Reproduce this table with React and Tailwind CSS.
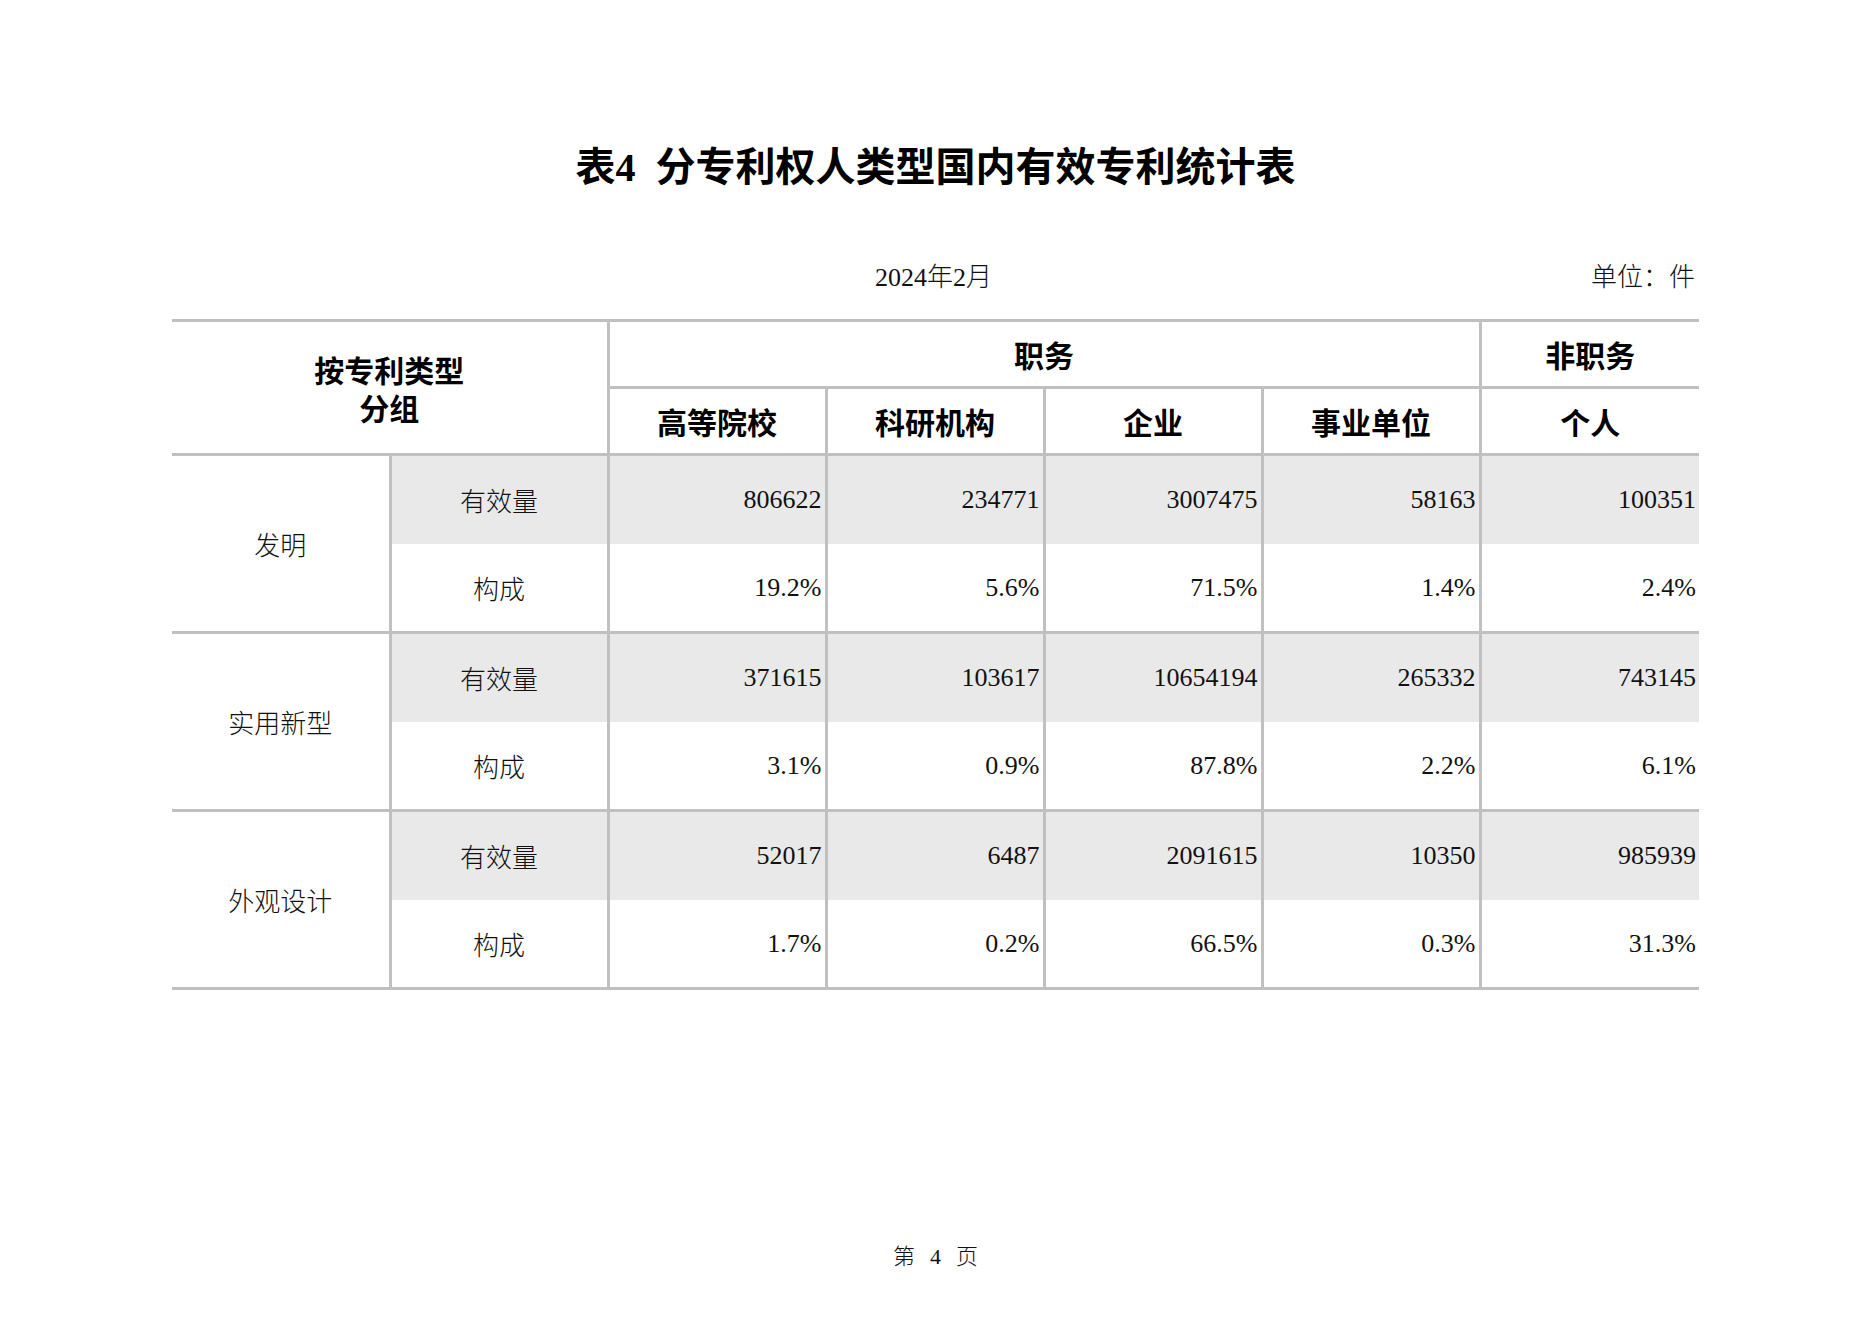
import React from "react";

const groups = [
  {
    name: "发明",
    count: ["806622", "234771", "3007475", "58163", "100351"],
    pct: ["19.2%", "5.6%", "71.5%", "1.4%", "2.4%"],
  },
  {
    name: "实用新型",
    count: ["371615", "103617", "10654194", "265332", "743145"],
    pct: ["3.1%", "0.9%", "87.8%", "2.2%", "6.1%"],
  },
  {
    name: "外观设计",
    count: ["52017", "6487", "2091615", "10350", "985939"],
    pct: ["1.7%", "0.2%", "66.5%", "0.3%", "31.3%"],
  },
];

const subHeads = ["高等院校", "科研机构", "企业", "事业单位", "个人"];

function NumCell({ v, gray, last, bottom }) {
  return (
    <td
      className={
        "text-right align-middle pr-[3px] text-[26px] text-[#111] font-['Liberation_Serif','Noto_Sans_CJK_SC',serif] border-[#c0c0c0] " +
        (gray ? "bg-[#e9e9e9] " : "bg-white ") +
        (last ? "" : "border-r-[3px] ") +
        (bottom ? "border-b-[3px]" : "")
      }
    >
      {v}
    </td>
  );
}

export default function App() {
  return (
    <div className="w-[1871px] h-[1323px] bg-white font-['Liberation_Serif','Noto_Sans_CJK_SC',serif] text-black">
      <div className="pt-[130px]">
        <div className="h-[76px] leading-[76px] text-center text-[40px] font-bold font-['Liberation_Serif','Noto_Sans_CJK_SC',sans-serif]">
          表4&nbsp;&nbsp;分专利权人类型国内有效专利统计表
        </div>
      </div>
      <div className="w-[1527px] mx-auto">
        <div className="mt-[51px] h-[40px] grid grid-cols-[1fr_auto_1fr] items-center text-[26px] text-[#111] font-light">
          <div />
          <div className="pr-[4px]">2024年2月</div>
          <div className="text-right pr-[4px]">单位：件</div>
        </div>
        <table className="mt-[22px] w-[1527px] table-fixed border-collapse">
          <colgroup>
            <col className="w-[218px]" />
            <col className="w-[218px]" />
            <col className="w-[218px]" />
            <col className="w-[218px]" />
            <col className="w-[218px]" />
            <col className="w-[218px]" />
            <col className="w-[219px]" />
          </colgroup>
          <thead className="font-['Noto_Sans_CJK_SC',sans-serif] font-bold text-[30px] text-black">
            <tr className="h-[67px]">
              <th
                colSpan={2}
                rowSpan={2}
                className="border-t-[3px] border-b-[3px] border-r-[3px] border-[#c0c0c0] font-bold leading-[38px] text-center align-middle"
              >
                <div>按专利类型</div>
                <div>分组</div>
              </th>
              <th
                colSpan={4}
                className="border-t-[3px] border-b-[3px] border-r-[3px] border-[#c0c0c0] font-bold text-center align-middle"
              >
                职务
              </th>
              <th className="border-t-[3px] border-b-[3px] border-[#c0c0c0] font-bold text-center align-middle">
                非职务
              </th>
            </tr>
            <tr className="h-[67px]">
              {subHeads.map((h, i) => (
                <th
                  key={h}
                  className={
                    "border-b-[3px] border-[#c0c0c0] font-bold text-center align-middle " +
                    (i < subHeads.length - 1 ? "border-r-[3px]" : "")
                  }
                >
                  {h}
                </th>
              ))}
            </tr>
          </thead>
          <tbody className="font-light">
            {groups.map((g) => (
              <React.Fragment key={g.name}>
                <tr className="h-[89px]">
                  <td
                    rowSpan={2}
                    className="bg-white border-r-[3px] border-b-[3px] border-[#c0c0c0] text-center align-middle text-[26px] text-[#111] font-['Noto_Sans_CJK_SC',sans-serif] font-light"
                  >
                    {g.name}
                  </td>
                  <td className="bg-[#e9e9e9] border-r-[3px] border-[#c0c0c0] text-center align-middle text-[26px] text-[#111] font-['Noto_Sans_CJK_SC',sans-serif] font-light">
                    有效量
                  </td>
                  {g.count.map((v, i) => (
                    <NumCell key={i} v={v} gray last={i === 4} />
                  ))}
                </tr>
                <tr className="h-[89px]">
                  <td className="bg-white border-r-[3px] border-b-[3px] border-[#c0c0c0] text-center align-middle text-[26px] text-[#111] font-['Noto_Sans_CJK_SC',sans-serif] font-light">
                    构成
                  </td>
                  {g.pct.map((v, i) => (
                    <NumCell key={i} v={v} last={i === 4} bottom />
                  ))}
                </tr>
              </React.Fragment>
            ))}
          </tbody>
        </table>
      </div>
      <div className="mt-[251px] h-[30px] flex items-center justify-center gap-[15px] text-[22px] text-[#111] font-light">
        <span>第</span>
        <span>4</span>
        <span>页</span>
      </div>
    </div>
  );
}
